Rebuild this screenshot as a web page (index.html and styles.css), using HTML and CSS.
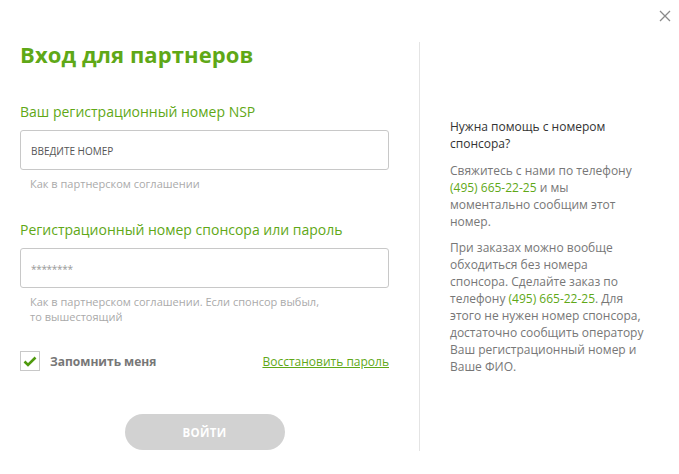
FILE: index.html
```html
<!DOCTYPE html>
<html lang="ru">
<head>
    <meta charset="UTF-8">
    <title>Вход для партнеров</title>
    <link rel="stylesheet" href="styles.css">
</head>
<body>
    <div class="modal">
        <button type="button" class="close-btn" aria-label="Закрыть">
            <svg width="12" height="12" viewBox="0 0 12 12"><path d="M1 1L11 11M11 1L1 11" stroke="#8a8a8a" stroke-width="1.3" fill="none"/></svg>
        </button>

        <form class="login-form">
            <h1>Вход для партнеров</h1>

            <label class="field-label" for="nspInput">Ваш регистрационный номер NSP</label>
            <input type="text" id="nspInput" class="field-input upper" placeholder="Введите номер">
            <p class="hint">Как в партнерском соглашении</p>

            <label class="field-label second" for="passInput">Регистрационный номер спонсора или пароль</label>
            <input type="password" id="passInput" class="field-input stars" placeholder="********">
            <p class="hint">Как в партнерском соглашении. Если спонсор выбыл,<br>то вышестоящий</p>

            <div class="remember-row">
                <label class="remember">
                    <span class="check">
                        <svg width="14" height="11" viewBox="0 0 14 11"><path d="M1.5 5.5L5 9L12.5 1.5" stroke="#4f9a0e" stroke-width="2.6" fill="none"/></svg>
                    </span>
                    Запомнить меня
                </label>
                <a href="#" class="restore">Восстановить пароль</a>
            </div>

            <div class="submit-row">
                <button type="submit" class="submit-btn">Войти</button>
            </div>
        </form>

        <aside class="help">
            <h3>Нужна помощь с номером спонсора?</h3>
            <p>Свяжитесь с нами по телефону <span class="phone">(495) 665-22-25</span> и мы моментально сообщим этот номер.</p>
            <p>При заказах можно вообще обходиться без номера спонсора. Сделайте заказ по телефону <span class="phone">(495) 665-22-25</span>. Для этого не нужен номер спонсора, достаточно сообщить оператору Ваш регистрационный номер и Ваше ФИО.</p>
        </aside>
    </div>
</body>
</html>
```

FILE: styles.css
```css
body {
    margin: 0;
    padding: 0;
    background: #fff;
    font-family: 'Open Sans', 'Noto Sans', sans-serif;
    color: #777;
}

.modal {
    position: relative;
    display: flex;
    width: 679px;
    height: 474px;
    overflow: hidden;
}

.close-btn {
    position: absolute;
    top: 10px;
    right: 8px;
    background: none;
    border: 0;
    padding: 0;
    cursor: pointer;
}

.login-form {
    width: 369px;
    padding: 40px 30px 0 20px;
}

h1 {
    margin: 0 0 34px;
    font-size: 22px;
    line-height: 28px;
    font-weight: 700;
    color: #5fa817;
    letter-spacing: 0.1px;
}

.field-label {
    display: block;
    font-size: 14px;
    line-height: 19px;
    color: #5fa817;
    margin-bottom: 9px;
}

.field-label.second {
    margin-top: 29px;
}

.field-input {
    display: block;
    box-sizing: border-box;
    width: 369px;
    height: 40px;
    border: 1px solid #c8c8c8;
    border-radius: 3px;
    padding: 0 10px;
    font-family: inherit;
    font-size: 11px;
    color: #555;
}

.field-input::placeholder {
    color: #555;
}

.field-input.upper::placeholder {
    text-transform: uppercase;
    font-size: 10px;
}

.field-input.stars::placeholder {
    color: #999;
    font-size: 10px;
    letter-spacing: -0.3px;
}

.hint {
    margin: 6px 0 0 10px;
    font-size: 11px;
    line-height: 15px;
    color: #aaa;
}

.remember-row {
    display: flex;
    justify-content: space-between;
    align-items: center;
    margin-top: 27px;
}

.remember {
    display: flex;
    align-items: center;
    gap: 10px;
    font-size: 12px;
    font-weight: 700;
    color: #777;
}

.check {
    display: flex;
    align-items: center;
    justify-content: center;
    box-sizing: border-box;
    width: 20px;
    height: 20px;
    border: 1px solid #c8c8c8;
}

.restore {
    font-size: 12px;
    color: #5fa817;
}

.submit-row {
    display: flex;
    justify-content: center;
    margin-top: 43px;
}

.submit-btn {
    width: 160px;
    height: 36px;
    border: 0;
    border-radius: 18px;
    background: #d2d2d2;
    color: #fff;
    font-family: inherit;
    font-size: 11.5px;
    font-weight: 700;
    text-transform: uppercase;
    letter-spacing: 0.3px;
}

.help {
    box-sizing: border-box;
    margin-top: 42px;
    height: 409px;
    border-left: 1px solid #e4e4e4;
    padding: 76px 0 0 30px;
    width: 225px;
    font-size: 12px;
    line-height: 17px;
}

.help h3 {
    margin: 0 0 10px;
    font-size: 12px;
    font-weight: 400;
    color: #333;
    width: 170px;
}

.help p {
    margin: 0 0 9px;
}

.phone {
    color: #5fa817;
}
```
